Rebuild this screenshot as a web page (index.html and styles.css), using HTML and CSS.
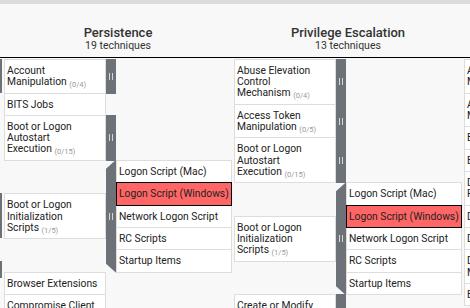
FILE: index.html
```html
<!DOCTYPE html>
<html>
<head>
<meta charset="utf-8">
<title>ATT&amp;CK Matrix</title>
<link rel="stylesheet" href="styles.css">
</head>
<body>
<div class="topbar"></div>
<div class="matrix">
  <div class="head"></div>
  <div class="head">
    <div class="head-name">Persistence</div>
    <div class="head-count">19 techniques</div>
  </div>
  <div class="head">
    <div class="head-name">Privilege Escalation</div>
    <div class="head-count">13 techniques</div>
  </div>
  <div class="head">
    <div class="head-name">Defense Evasion</div>
    <div class="head-count">37 techniques</div>
  </div>
  <div class="rule"></div>

  <div class="col edge">
    <div class="ebar e1"></div>
    <div class="ebar e2"></div>
    <div class="ebar e3"></div>
  </div>

  <div class="col">
    <div class="row">
      <div class="cell">Account <span class="nw">Manipulation <span class="cnt">(0/4)</span></span></div>
      <div class="side"><span class="grip"></span></div>
    </div>
    <div class="row">
      <div class="cell">BITS Jobs</div>
    </div>
    <div class="row">
      <div class="cell">Boot or Logon Autostart <span class="nw">Execution <span class="cnt">(0/15)</span></span></div>
      <div class="side"><span class="grip"></span></div>
    </div>
    <div class="row open">
      <div class="tech">
        <div class="cell">Boot or Logon Initialization <span class="nw">Scripts <span class="cnt">(1/5)</span></span></div>
      </div>
      <div class="side fold"><span class="grip"></span></div>
      <div class="subs">
        <div class="cell sub">Logon Script (Mac)</div>
        <div class="cell sub sel">Logon Script (Windows)</div>
        <div class="cell sub">Network Logon Script</div>
        <div class="cell sub">RC Scripts</div>
        <div class="cell sub">Startup Items</div>
      </div>
    </div>
    <div class="row">
      <div class="cell">Browser Extensions</div>
    </div>
    <div class="row">
      <div class="cell">Compromise Client Software Binary</div>
    </div>
    <div class="row">
      <div class="cell">Create <span class="nw">Account <span class="cnt">(0/3)</span></span></div>
      <div class="side"><span class="grip"></span></div>
    </div>
  </div>

  <div class="col">
    <div class="row">
      <div class="cell">Abuse Elevation Control <span class="nw">Mechanism <span class="cnt">(0/4)</span></span></div>
      <div class="side"><span class="grip"></span></div>
    </div>
    <div class="row">
      <div class="cell">Access Token <span class="nw">Manipulation <span class="cnt">(0/5)</span></span></div>
      <div class="side"><span class="grip"></span></div>
    </div>
    <div class="row">
      <div class="cell">Boot or Logon Autostart <span class="nw">Execution <span class="cnt">(0/15)</span></span></div>
      <div class="side"><span class="grip"></span></div>
    </div>
    <div class="row open">
      <div class="tech">
        <div class="cell">Boot or Logon Initialization <span class="nw">Scripts <span class="cnt">(1/5)</span></span></div>
      </div>
      <div class="side fold"><span class="grip"></span></div>
      <div class="subs">
        <div class="cell sub">Logon Script (Mac)</div>
        <div class="cell sub sel">Logon Script (Windows)</div>
        <div class="cell sub">Network Logon Script</div>
        <div class="cell sub">RC Scripts</div>
        <div class="cell sub">Startup Items</div>
      </div>
    </div>
    <div class="row">
      <div class="cell">Create or Modify System <span class="nw">Process <span class="cnt">(0/4)</span></span></div>
      <div class="side"><span class="grip"></span></div>
    </div>
  </div>

  <div class="col">
    <div class="row"><div class="cell wide">Abuse Elevation Control <span class="nw">Mechanism <span class="cnt">(0/4)</span></span></div></div>
    <div class="row"><div class="cell wide">Access Token <span class="nw">Manipulation <span class="cnt">(0/5)</span></span></div></div>
    <div class="row"><div class="cell wide">BITS Jobs</div></div>
    <div class="row"><div class="cell wide">Build Image on Host</div></div>
    <div class="row"><div class="cell wide">Deobfuscate/Decode Files or Information</div></div>
    <div class="row"><div class="cell wide">Deploy Container</div></div>
    <div class="row"><div class="cell wide">Direct Volume Access</div></div>
    <div class="row"><div class="cell wide">Domain Policy <span class="nw">Modification <span class="cnt">(0/2)</span></span></div></div>
    <div class="row"><div class="cell wide">Execution Guardrails <span class="cnt">(0/1)</span></div></div>
  </div>
</div>
</body>
</html>
```

FILE: styles.css
```css
* { box-sizing: border-box; }
html, body { margin: 0; padding: 0; }
body {
  width: 470px;
  height: 308px;
  overflow: hidden;
  background: #f8f8f8;
  font-family: Roboto, "Noto Sans", sans-serif;
  color: #222;
}
.topbar { height: 4px; background: #dcdcdc; }
.matrix {
  display: grid;
  grid-template-columns: 2px 228px 228px 180px;
  grid-template-rows: 53px 1px auto;
  column-gap: 2px;
}
.head {
  display: flex;
  flex-direction: column;
  justify-content: flex-end;
  align-items: center;
  padding-bottom: 5px;
  color: #333;
  white-space: nowrap;
}
.head-name { font-size: 13px; line-height: 15px; font-weight: 500; }
.head-count { font-size: 10.5px; line-height: 12px; }
.rule { grid-column: 1 / -1; background: #000; }

.col { display: flex; flex-direction: column; padding-top: 1px; }
.row { display: flex; }
.row + .row { margin-top: -1px; }

.cell {
  width: 102px;
  background: #fff;
  border: 1px solid #ddd;
  padding: 5px 1px 5.2px 2px;
  font-size: 10.3px;
  line-height: 11.2px;
}
.cell.wide { width: 125px; }
.nw { white-space: nowrap; }
.cnt { font-size: 7.5px; line-height: 0; color: #999; vertical-align: -2px; }

.side {
  width: 10px;
  background: #6d7278;
  display: flex;
  align-items: center;
  justify-content: center;
}
.grip {
  width: 4px;
  height: 7px;
  border-left: 1px solid #d4d6d9;
  border-right: 1px solid #d4d6d9;
}
.fold { clip-path: polygon(0 9px, 100% 0, 100% 100%, 0 calc(100% - 9px)); }

.tech { display: flex; align-items: center; }
.subs { display: flex; flex-direction: column; }
.subs .cell + .cell { margin-top: -1px; }
.cell.sub { width: 116px; }
.cell.sel { background: #ff6666; border-color: #000; position: relative; z-index: 1; }

.edge { padding-top: 1px; }
.ebar { background: #6d7278; }
.e1 { height: 34px; }
.e2 { margin-top: 100px; height: 45px; }
.e3 { margin-top: 23px; height: 17px; }
```
